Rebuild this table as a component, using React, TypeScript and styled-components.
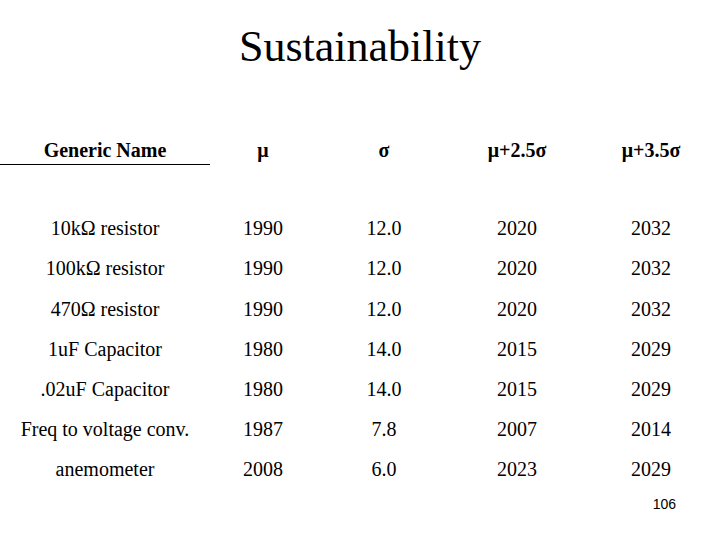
import React from "react";
import styled, { createGlobalStyle } from "styled-components";

const GlobalStyle = createGlobalStyle`
  html, body {
    margin: 0;
    padding: 0;
    background: #ffffff;
  }
  body {
    font-family: "Liberation Serif", "Times New Roman", serif;
    color: #000000;
  }
`;

const Slide = styled.div`
  width: 720px;
  height: 540px;
  box-sizing: border-box;
  padding-top: 22px;
  display: flex;
  flex-direction: column;
  background: #ffffff;
  overflow: hidden;
`;

const Title = styled.h1`
  margin: 0;
  font-family: "Liberation Serif", "Times New Roman", serif;
  font-weight: normal;
  font-size: 44px;
  line-height: 50px;
  text-align: center;
`;

const Table = styled.div`
  margin-top: 67px;
  display: grid;
  grid-template-columns: 210px 106px 136px 130px 138px;
`;

const HeadCell = styled.div<{ $ruled?: boolean }>`
  font-family: "Liberation Serif", "Times New Roman", serif;
  font-weight: bold;
  font-size: 20px;
  line-height: 22px;
  text-align: center;
  padding-bottom: 3px;
  border-bottom: 1px solid ${(p) => (p.$ruled ? "#000000" : "transparent")};
`;

const Spacer = styled.div`
  grid-column: 1 / -1;
  height: 43.15px;
`;

const Cell = styled.div`
  font-family: "Liberation Serif", "Times New Roman", serif;
  font-size: 20px;
  line-height: 40.2px;
  height: 40.2px;
  text-align: center;
  white-space: nowrap;
`;

const Footer = styled.div`
  margin-top: 6.85px;
  display: flex;
  justify-content: flex-end;
  padding-right: 44px;
`;

const PageNumber = styled.span`
  font-family: "Liberation Sans", Arial, sans-serif;
  font-size: 14px;
  line-height: 16px;
`;

const headers = ["Generic Name", "μ", "σ", "μ+2.5σ", "μ+3.5σ"];

const rows: string[][] = [
  ["10kΩ resistor", "1990", "12.0", "2020", "2032"],
  ["100kΩ resistor", "1990", "12.0", "2020", "2032"],
  ["470Ω resistor", "1990", "12.0", "2020", "2032"],
  ["1uF Capacitor", "1980", "14.0", "2015", "2029"],
  [".02uF Capacitor", "1980", "14.0", "2015", "2029"],
  ["Freq to voltage conv.", "1987", "7.8", "2007", "2014"],
  ["anemometer", "2008", "6.0", "2023", "2029"],
];

export default function App() {
  return (
    <>
      <GlobalStyle />
      <Slide>
        <Title>Sustainability</Title>
        <Table>
          {headers.map((h, i) => (
            <HeadCell key={h} $ruled={i === 0}>
              {h}
            </HeadCell>
          ))}
          <Spacer />
          {rows.map((r, ri) =>
            r.map((c, ci) => <Cell key={`${ri}-${ci}`}>{c}</Cell>)
          )}
        </Table>
        <Footer>
          <PageNumber>106</PageNumber>
        </Footer>
      </Slide>
    </>
  );
}
